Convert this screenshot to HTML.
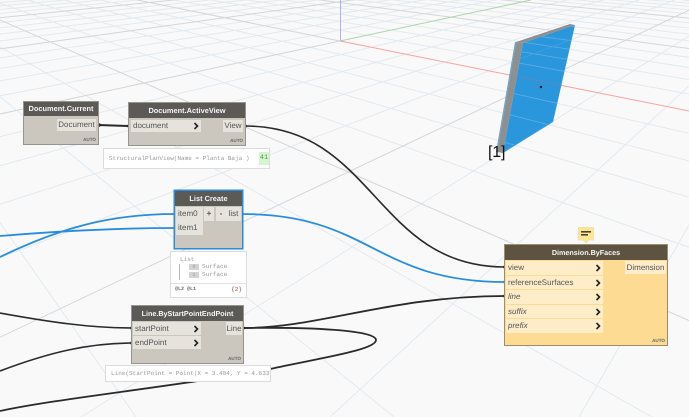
<!DOCTYPE html>
<html><head><meta charset="utf-8"><style>
html,body{margin:0;padding:0}
body{width:689px;height:417px;overflow:hidden;position:relative;background:#f9f9f9;font-family:"Liberation Sans",sans-serif;text-rendering:geometricPrecision}
svg.bg{position:absolute;left:0;top:0}
.n{position:absolute;background:#cbc7bf;box-sizing:border-box;box-shadow:0 0 0 1px #96948e}
.h{position:absolute;left:0;top:0;right:0;background:#5c5a57;color:#f6f6f6;font-weight:bold;font-size:7.4px;text-align:center;white-space:nowrap}
.p{position:absolute;background:#e6e3dc;color:#555;font-size:8px;line-height:13px;height:13px;padding-left:2px;box-sizing:border-box;white-space:nowrap}
.o{padding:0;text-align:center}
.a{position:absolute;right:2px;bottom:2px;font-size:4.6px;font-weight:bold;color:#666}
.c{position:absolute;right:2px;top:3px}
.v{position:absolute;background:#fff;border:1px solid #dcdcdc;box-sizing:border-box;color:#9a9a9a;font:6px/1 "Liberation Mono",monospace;white-space:nowrap;overflow:hidden}
.y{background:#fedb93;box-shadow:0 0 0 1px #9a8e6c}
.y .p{background:#feedc8}
.y .h{background:#5e5340}
</style></head><body>
<svg class="bg" width="689" height="417" viewBox="0 0 689 417" fill="none">
<defs>
<path id="lr" d="M-204 -69L136 417M-204 -69L394 417M-204 -69L652 417M-204 -69L1168 417M-204 -69L1426 417M-204 -69L1684 417M-204 -69L1942 417M-204 -69L2458 417M-204 -69L2716 417M-204 -69L2974 417M-204 -69L3232 417M-204 -69L3748 417M-204 -69L4006 417M-204 -69L4264 417M-204 -69L4522 417M-204 -69L5038 417M-204 -69L5296 417M-204 -69L5554 417M-204 -69L5812 417"/>
<path id="lg" d="M858 -70L579 417M858 -70L330 417M858 -70L81 417M858 -70L-417 417M858 -70L-666 417M858 -70L-915 417M858 -70L-1164 417M858 -70L-1662 417M858 -70L-1911 417M858 -70L-2160 417M858 -70L-2409 417M858 -70L-2907 417M858 -70L-3156 417M858 -70L-3405 417M858 -70L-3654 417M858 -70L-4152 417M858 -70L-4401 417M858 -70L-4650 417M858 -70L-4899 417"/>
<clipPath id="wall"><polygon points="523,43 575,25 553,122 503,153"/></clipPath>
</defs>
<use href="#lr" stroke="#e2eaf0" stroke-width="1"/>
<use href="#lg" stroke="#e2eaf0" stroke-width="1"/>
<path d="M-204 -69L910 417M-204 -69L340 41M-204 -69L3490 417M-204 -69L4780 417M-204 -69L6070 417M858 -70L-168 417M340 41L-1413 417M858 -70L-2658 417M858 -70L-3903 417M858 -70L-5148 417" stroke="#d2d6da" stroke-width="1"/>
<line x1="340.5" y1="0" x2="340.5" y2="41" stroke="#b0b0f4" stroke-width="1"/>
<line x1="340" y1="41" x2="531" y2="0" stroke="#add4a8" stroke-width="1"/>
<line x1="340" y1="41" x2="689" y2="111" stroke="#f5a3a3" stroke-width="1"/>
<polygon points="516,42 570,24 575,25 523,43" fill="#8f8f8f"/>
<polygon points="516,42 515,42 496,152 497,152" fill="#5aa9e0"/>
<polygon points="516,42 523,43 503,153 497,152" fill="#8f8f8f"/>
<polygon points="523,43 575,25 553,122 503,153" fill="#2a96db"/>
<g clip-path="url(#wall)">
<use href="#lr" stroke="#56abe3" stroke-width="1"/>
<use href="#lg" stroke="#3d9fdf" stroke-width="1"/>
<line x1="340" y1="41" x2="689" y2="111" stroke="#5f86c0" stroke-width="1"/>
</g>
<circle cx="541" cy="87" r="1.2" fill="#111"/>
<g fill="none" stroke="#2a2a2a" stroke-width="1.6">
<path d="M98 125L129 126" stroke-width="2"/>
<path d="M245 126C375 126 375 267 505 267"/>
<path d="M243 328C320 328 390 296 505 296" stroke-width="1.8"/>
<path d="M243 328C310 327 376 330 376 340C376 350 320 358 270 369C180 386 60 398 0 411" stroke-width="1.8"/>
<path d="M0 313C50 322 90 328 132 328"/>
<path d="M0 371C50 352 90 343 132 343"/>
</g>
<g fill="none" stroke="#2a8ce0" stroke-width="1.8">
<path d="M242 214C370 214 375 282 505 282"/>
<path d="M0 236C60 231 120 228 175 228"/>
<path d="M0 257C60 228 110 214 175 214"/>
</g>
<g fill="#262626">
<circle cx="99" cy="125" r="1.8"/><circle cx="129" cy="126" r="1.8"/><circle cx="245" cy="126" r="1.8"/>
<circle cx="243" cy="328" r="1.8"/><circle cx="132" cy="328" r="1.8"/><circle cx="132" cy="343" r="1.8"/>
<circle cx="505" cy="267" r="1.8"/><circle cx="505" cy="296" r="1.8"/>
</g>
<circle cx="505" cy="282" r="1.8" fill="#2a8ce0"/>
<circle cx="242" cy="214" r="1.8" fill="#2a8ce0"/>
<circle cx="175" cy="214" r="1.8" fill="#2a8ce0"/>
<circle cx="175" cy="228" r="1.8" fill="#2a8ce0"/>
</svg>

<div style="position:absolute;left:488px;top:144px;font-size:16px;line-height:18px;color:#111;letter-spacing:-.2px">[1]</div>

<!-- Document.Current -->
<div class="n" style="left:24px;top:102px;width:74px;height:42px">
<div class="h" style="height:14px;line-height:14px">Document.Current</div>
<div class="p o" style="left:33px;top:17px;width:39px;height:12px;line-height:12px">Document</div>
<div class="a">AUTO</div>
</div>

<!-- Document.ActiveView -->
<div class="n" style="left:129px;top:103px;width:116px;height:42px">
<div class="h" style="height:15px;line-height:15px">Document.ActiveView</div>
<div class="p" style="left:2px;top:17px;width:70px;height:12px;line-height:12px">document<svg class="c" style="top:2px" width="6" height="8" viewBox="0 0 6 8"><path d="M1.5 1L4.5 4L1.5 7" fill="none" stroke="#222" stroke-width="1.6"/></svg></div>
<div class="p o" style="left:94px;top:17px;width:20px;height:12px;line-height:12px">View</div>
<div class="a">AUTO</div>
</div>
<div class="v" style="left:103px;top:148px;width:167px;height:21px;line-height:19px;padding-left:5px">StructuralPlanView(Name = Planta Baja )<span style="position:absolute;left:155px;top:3px;width:10px;height:13px;line-height:13px;background:#d5f5d0;color:#4f9a4f;font-size:7px;text-align:center">41</span></div>

<!-- List Create -->
<div class="n" style="left:175px;top:191px;width:67px;height:57px;box-shadow:0 0 0 1.5px #2a8ce0">
<div class="h" style="height:15px;line-height:15px">List Create</div>
<div class="p" style="left:1px;top:16px;width:27px;height:14px;line-height:14px">item0</div>
<div class="p o" style="left:29px;top:16px;width:10px;height:14px;line-height:13px;font-weight:bold">+</div>
<div class="p o" style="left:41px;top:16px;width:10px;height:14px;line-height:13px;font-weight:bold">-</div>
<div class="p o" style="left:51px;top:16px;width:15px;height:14px;line-height:14px">list</div>
<div class="p" style="left:1px;top:30px;width:27px;height:14px;line-height:14px">item1</div>
</div>
<div class="v" style="left:170px;top:251px;width:77px;height:47px">
<span style="position:absolute;left:9px;top:5px">List</span>
<span style="position:absolute;left:18px;top:12px;width:10px;height:6px;background:#d4d4d4;text-align:center;font-size:5px;line-height:6px">0</span>
<span style="position:absolute;left:31px;top:12px">Surface</span>
<span style="position:absolute;left:18px;top:20px;width:10px;height:6px;background:#d4d4d4;text-align:center;font-size:5px;line-height:6px">1</span>
<span style="position:absolute;left:31px;top:20px">Surface</span>
<span style="position:absolute;left:8px;top:12px;width:0;height:16px;border-left:1px solid #b5b5b5"></span>
<span style="position:absolute;left:0;right:0;top:31px;border-top:1px solid #e2e2e2"></span>
<span style="position:absolute;left:4px;top:35px;color:#666;font-weight:bold;font-size:5px">@L2 @L1</span>
<span style="position:absolute;right:4px;top:35px;color:#666;font-size:6px">{<span style="color:#c0392b">2</span>}</span>
</div>

<!-- Line.ByStartPointEndPoint -->
<div class="n" style="left:132px;top:306px;width:111px;height:57px">
<div class="h" style="height:15px;line-height:15px;font-size:7.2px">Line.ByStartPointEndPoint</div>
<div class="p" style="left:1px;top:16px;width:68px;height:13px">startPoint<svg class="c" width="6" height="8" viewBox="0 0 6 8"><path d="M1.5 1L4.5 4L1.5 7" fill="none" stroke="#222" stroke-width="1.6"/></svg></div>
<div class="p" style="left:1px;top:30px;width:68px;height:13px">endPoint<svg class="c" width="6" height="8" viewBox="0 0 6 8"><path d="M1.5 1L4.5 4L1.5 7" fill="none" stroke="#222" stroke-width="1.6"/></svg></div>
<div class="p o" style="left:94px;top:16px;width:16px;height:13px">Line</div>
<div class="a">AUTO</div>
</div>
<div class="v" style="left:105px;top:365px;width:166px;height:17px;line-height:15px;padding-left:5px">Line(StartPoint = Point(X = 3.404, Y = 4.633</div>

<!-- Dimension.ByFaces -->
<div class="n y" style="left:505px;top:245px;width:162px;height:100px">
<div class="h" style="height:15px;line-height:15px;font-size:7.2px">Dimension.ByFaces</div>
<div class="p" style="left:1px;top:16px;width:97px;height:13.5px;line-height:13px">view<svg class="c" width="6" height="8" viewBox="0 0 6 8"><path d="M1.5 1L4.5 4L1.5 7" fill="none" stroke="#222" stroke-width="1.6"/></svg></div>
<div class="p" style="left:1px;top:30.5px;width:97px;height:13.5px;line-height:13px">referenceSurfaces<svg class="c" width="6" height="8" viewBox="0 0 6 8"><path d="M1.5 1L4.5 4L1.5 7" fill="none" stroke="#222" stroke-width="1.6"/></svg></div>
<div class="p" style="left:1px;top:45px;width:97px;height:13.5px;line-height:13px;font-style:italic">line<svg class="c" width="6" height="8" viewBox="0 0 6 8"><path d="M1.5 1L4.5 4L1.5 7" fill="none" stroke="#222" stroke-width="1.6"/></svg></div>
<div class="p" style="left:1px;top:59.5px;width:97px;height:13.5px;line-height:13px;font-style:italic">suffix<svg class="c" width="6" height="8" viewBox="0 0 6 8"><path d="M1.5 1L4.5 4L1.5 7" fill="none" stroke="#222" stroke-width="1.6"/></svg></div>
<div class="p" style="left:1px;top:74px;width:97px;height:13.5px;line-height:13px;font-style:italic">prefix<svg class="c" width="6" height="8" viewBox="0 0 6 8"><path d="M1.5 1L4.5 4L1.5 7" fill="none" stroke="#222" stroke-width="1.6"/></svg></div>
<div class="p o" style="left:120px;top:16px;width:41px;height:13px">Dimension</div>
<div class="a">AUTO</div>
</div>
<svg style="position:absolute;left:577px;top:226px" width="18" height="19" viewBox="0 0 18 19">
<path d="M1.5 1.5H16.5V14H11.5L9 17L6.5 14H1.5Z" fill="#fde68f" stroke="#f0e2b0" stroke-width="1"/>
<rect x="4" y="5" width="10" height="1.6" fill="#444"/><rect x="4" y="8" width="7" height="1.6" fill="#444"/>
</svg>
</body></html>
